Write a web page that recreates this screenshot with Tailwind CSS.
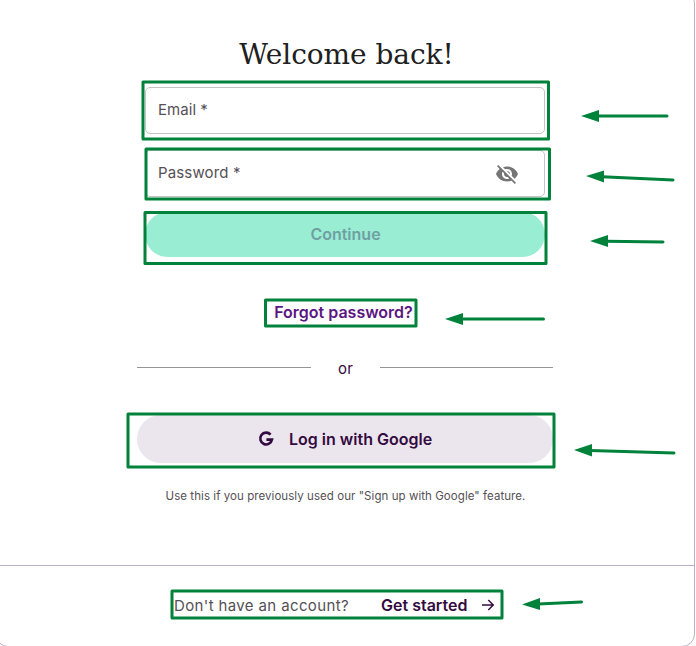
<!DOCTYPE html>
<html lang="en">
<head>
<meta charset="utf-8">
<title>Welcome back!</title>
<script src="https://cdn.jsdelivr.net/npm/@tailwindcss/browser@4"></script>
</head>
<body class="relative h-[646px] w-[696px] overflow-hidden bg-[#fdfcfa] font-['Inter',sans-serif] text-[#340b40]">
<div class="-mt-[10px] -ml-[5px] flex h-[657px] w-[700px] flex-col rounded-[13px] border border-[#beb0c4] bg-white">
  <main class="ml-[141px] flex h-[574px] w-[416px] shrink-0 flex-col items-center pt-[42px]">
    <h1 class="h-[44px] pl-[3px] font-['DejaVu_Serif',serif] text-[28px] leading-[43px] tracking-[-0.05px] whitespace-nowrap text-[#202020]">Welcome back!</h1>
    <form class="mt-[10px] flex w-[400px] flex-col">
      <label class="flex h-[47px] items-center rounded-[5px] border border-[#c4c4c4] pl-3 text-[15px] tracking-[0.05px] text-[#555055]"><span>Email *</span></label>
      <label class="mt-4 flex h-[47px] items-center justify-between rounded-[5px] border border-[#c4c4c4] pr-[25px] pl-3 text-[15px] tracking-[0.15px] text-[#555055]"><span>Password *</span>
        <svg class="h-6 w-6" viewBox="0 0 24 24" fill="#757575"><path d="M12 7c2.76 0 5 2.24 5 5 0 .65-.13 1.26-.36 1.83l2.92 2.92c1.51-1.26 2.7-2.89 3.43-4.75-1.73-4.39-6-7.5-11-7.5-1.4 0-2.74.25-3.98.7l2.16 2.16C10.74 7.13 11.35 7 12 7zM2 4.27l2.28 2.28.46.46C3.08 8.3 1.78 10.02 1 12c1.73 4.39 6 7.5 11 7.5 1.55 0 3.03-.3 4.38-.84l.42.42L19.73 22 21 20.73 3.27 3 2 4.27zM7.53 9.8l1.55 1.55c-.05.21-.08.43-.08.65 0 1.66 1.34 3 3 3 .22 0 .44-.03.65-.08l1.55 1.55c-.67.33-1.41.53-2.2.53-2.76 0-5-2.24-5-5 0-.79.2-1.53.53-2.2zm4.31-.78l3.15 3.15.02-.16c0-1.66-1.34-3-3-3l-.17.01z"/></svg>
      </label>
      <button type="button" class="mt-[15px] h-[45px] rounded-full bg-[#99edd2] pb-px pl-px text-[16px] leading-[42px] font-semibold text-[#709fa3]">Continue</button>
    </form>
    <a class="mt-[43px] h-6 pr-[3px] text-[16px] leading-6 font-semibold whitespace-nowrap text-[#5b1681]">Forgot password?</a>
    <div class="mt-[31px] flex h-6 w-full items-center">
      <div class="h-px w-[174px] bg-[#949494]"></div>
      <span class="flex-1 pt-[3px] text-center text-[15px] leading-6 tracking-[0.2px]">or</span>
      <div class="h-px w-[173px] bg-[#949494]"></div>
    </div>
    <button type="button" class="mt-[36px] flex h-[48px] w-full items-center rounded-full bg-[#ebe6ed] pl-[121px] text-[16px] font-semibold">
      <svg class="h-4 w-4" viewBox="0 0 16 16" fill="none" stroke="#340b40" stroke-width="2.600"><path d="M12.600 3.600A5.900 5.900 0 1 0 14 8.600H8.400"/></svg>
      <span class="ml-[15px] pb-px">Log in with Google</span>
    </button>
    <p class="mt-[23px] pl-px text-[11.5px] leading-5 tracking-[0.06px] whitespace-nowrap text-[#555055]">Use this if you previously used our "Sign up with Google" feature.</p>
  </main>
  <footer class="flex h-[80px] items-center border-t border-[#beb0c4] pl-[178px] text-[15px] whitespace-nowrap">
    <span class="w-[207px] pt-[2px] tracking-[0.37px] text-[#555055]">Don't have an account?</span>
    <span class="w-[101px] pb-[2px] text-[16px] font-semibold">Get started</span>
    <svg class="mb-px h-3 w-3" viewBox="0 0 12 12" fill="none" stroke="#340b40" stroke-width="1.500"><path d="M0 6h11M6.300 1l5 5-5 5"/></svg>
  </footer>
</div>
<svg class="absolute inset-0" width="696" height="646" fill="none" stroke="#00823b" stroke-width="3" stroke-linecap="round" stroke-linejoin="round">
  <rect x="143" y="82" width="405.500" height="57"/>
  <rect x="146" y="149" width="403.500" height="50"/>
  <rect x="145" y="212.500" width="401" height="51"/>
  <rect x="265.500" y="300" width="150.500" height="26"/>
  <rect x="128" y="414" width="426" height="53"/>
  <rect x="172" y="591" width="330" height="27"/>
  <path d="M597 116H667M602 176.800L673 180M606 241.200L663 242M461 319H543.500M590 450.500L674 453M538 604L581.500 602"/>
  <g fill="#00823b" stroke="none">
    <path d="M581 116l18-6v12zM586 176l18-5.500v12zM590 241l18-6v12zM445 319l18-6v12zM574 450l18-6v12.500zM522 604.500l18-6.500v12z"/>
  </g>
</svg>
</body>
</html>
